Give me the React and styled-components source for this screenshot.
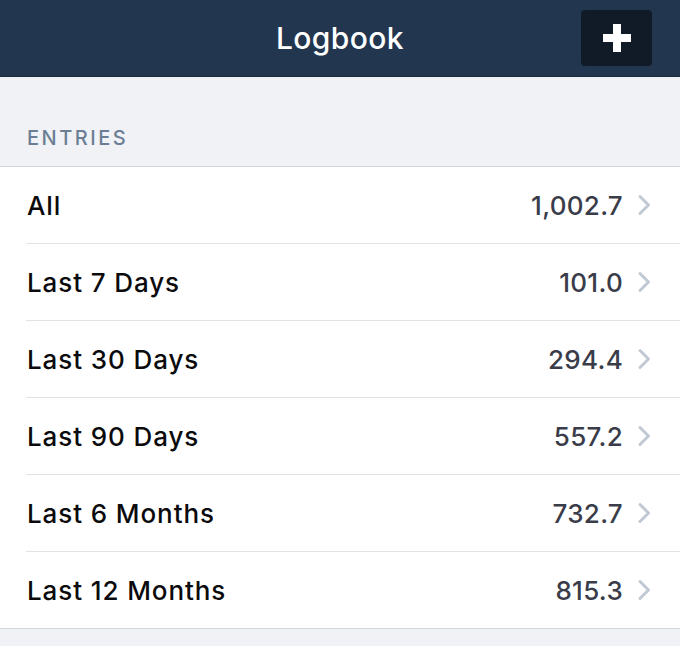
import React from 'react';
import styled, { createGlobalStyle } from 'styled-components';

const GlobalStyle = createGlobalStyle`
  html, body {
    margin: 0;
    padding: 0;
    background: #f0f2f6;
    font-family: Inter, "Liberation Sans", Arial, sans-serif;
    -webkit-font-smoothing: antialiased;
  }
`;

const Screen = styled.div`
  width: 680px;
  min-height: 646px;
  background: #f0f2f6;
`;

const NavBar = styled.header`
  position: relative;
  height: 76px;
  background: #22374f;
  border-bottom: 1px solid #1b2c40;
  display: flex;
  align-items: center;
  justify-content: center;
`;

const Title = styled.h1`
  margin: 0;
  color: #ffffff;
  font-size: 30px;
  font-weight: 500;
  letter-spacing: 0.4px;
`;

const AddButton = styled.button`
  position: absolute;
  right: 28px;
  top: 10px;
  width: 71px;
  height: 56px;
  border: none;
  border-radius: 4px;
  background: #111a27;
  display: flex;
  align-items: center;
  justify-content: center;
  padding: 0;
  cursor: pointer;
`;

const SectionHeader = styled.div`
  height: 90px;
  box-sizing: border-box;
  padding: 0 27px 16px;
  display: flex;
  align-items: flex-end;
  border-bottom: 1px solid #cfd6de;
  color: #6b7e93;
  font-size: 20px;
  font-weight: 500;
  letter-spacing: 2.5px;
`;

const List = styled.ul`
  list-style: none;
  margin: 0;
  padding: 0 0 0 26px;
  background: #ffffff;
  border-bottom: 1px solid #cfd6de;
`;

const Row = styled.li`
  height: 76px;
  display: flex;
  align-items: center;
  padding-right: 27px;
  border-bottom: ${p => (p.$last ? 'none' : '1px solid #dfe2e6')};
`;

const Label = styled.span`
  flex: 1;
  padding-left: 1px;
  color: #0b0b0d;
  font-size: 26px;
  font-weight: 500;
  letter-spacing: 0.9px;
`;

const Value = styled.span`
  color: #3a3c4a;
  font-size: 26px;
  font-weight: 500;
  letter-spacing: 0.3px;
  margin-right: 13px;
`;

const Chevron = () => (
  <svg width="17" height="22" viewBox="0 0 17 22" fill="none">
    <path d="M4 2.5l8.5 8.5L4 19.5" stroke="#c1c9d4" strokeWidth="3" strokeLinecap="round" strokeLinejoin="round" />
  </svg>
);

const PlusIcon = () => (
  <svg width="28" height="28" viewBox="0 0 28 28">
    <rect x="10" y="0" width="8" height="28" fill="#ffffff" />
    <rect x="0" y="10" width="28" height="8" fill="#ffffff" />
  </svg>
);

const entries = [
  { label: 'All', value: '1,002.7' },
  { label: 'Last 7 Days', value: '101.0' },
  { label: 'Last 30 Days', value: '294.4' },
  { label: 'Last 90 Days', value: '557.2' },
  { label: 'Last 6 Months', value: '732.7' },
  { label: 'Last 12 Months', value: '815.3' },
];

export default function App() {
  return (
    <Screen>
      <GlobalStyle />
      <NavBar>
        <Title>Logbook</Title>
        <AddButton aria-label="Add entry">
          <PlusIcon />
        </AddButton>
      </NavBar>
      <SectionHeader>ENTRIES</SectionHeader>
      <List>
        {entries.map((entry, i) => (
          <Row key={entry.label} $last={i === entries.length - 1}>
            <Label>{entry.label}</Label>
            <Value>{entry.value}</Value>
            <Chevron />
          </Row>
        ))}
      </List>
    </Screen>
  );
}
